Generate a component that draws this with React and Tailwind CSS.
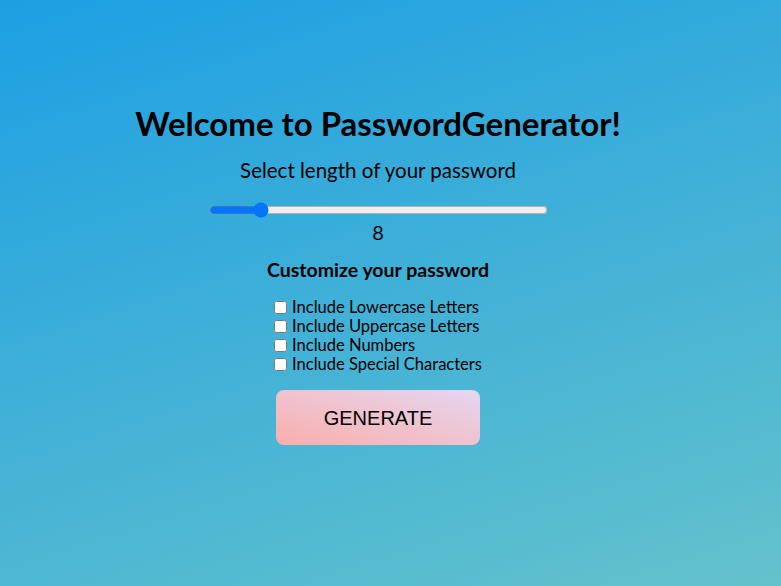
import React, { useState } from 'react';

const options = [
  'Include Lowercase Letters',
  'Include Uppercase Letters',
  'Include Numbers',
  'Include Special Characters',
];

const App = () => {
  const [length, setLength] = useState(8);
  const [checked, setChecked] = useState([]);

  const toggle = (label) => {
    if (checked.includes(label)) {
      setChecked(checked.filter((c) => c !== label));
    } else {
      setChecked([...checked, label]);
    }
  };

  return (
    <div
      className="min-h-screen w-full bg-[linear-gradient(162deg,#1d9fe3,#64c2cc)] text-black flex flex-col items-center pt-[104px] pr-[25px]"
      style={{ fontFamily: 'Lato, "Open Sans", sans-serif' }}
    >
      <h1 className="text-[33px] font-bold leading-[38px]">Welcome to PasswordGenerator!</h1>
      <p className="text-[20.5px] leading-[24px] mt-[16px]">Select length of your password</p>
      <input
        type="range"
        min="4"
        max="33"
        value={length}
        onChange={(e) => setLength(Number(e.target.value))}
        className="w-[339px] mt-[20px] accent-[#0075ff]"
      />
      <div className="text-[20px] leading-[24px] mt-[2px]">{length}</div>
      <h2 className="text-[19.5px] font-bold leading-[24px] mt-[14px]">Customize your password</h2>
      <div className="flex flex-col mt-[16px]">
        {options.map((label) => (
          <label key={label} className="flex items-center text-[16.5px] leading-[19px] h-[19px]">
            <input
              type="checkbox"
              checked={checked.includes(label)}
              onChange={() => toggle(label)}
              className="w-[13px] h-[13px] mr-[5px]"
            />
            {label}
          </label>
        ))}
      </div>
      <button
        className="mt-[16px] w-[204px] h-[55px] rounded-lg bg-gradient-to-tr from-[#f9aeab] to-[#e4d6f2] text-[20px] text-black"
        style={{ fontFamily: '"Liberation Sans", Arial, sans-serif' }}
      >
        GENERATE
      </button>
    </div>
  );
};

export default App;
